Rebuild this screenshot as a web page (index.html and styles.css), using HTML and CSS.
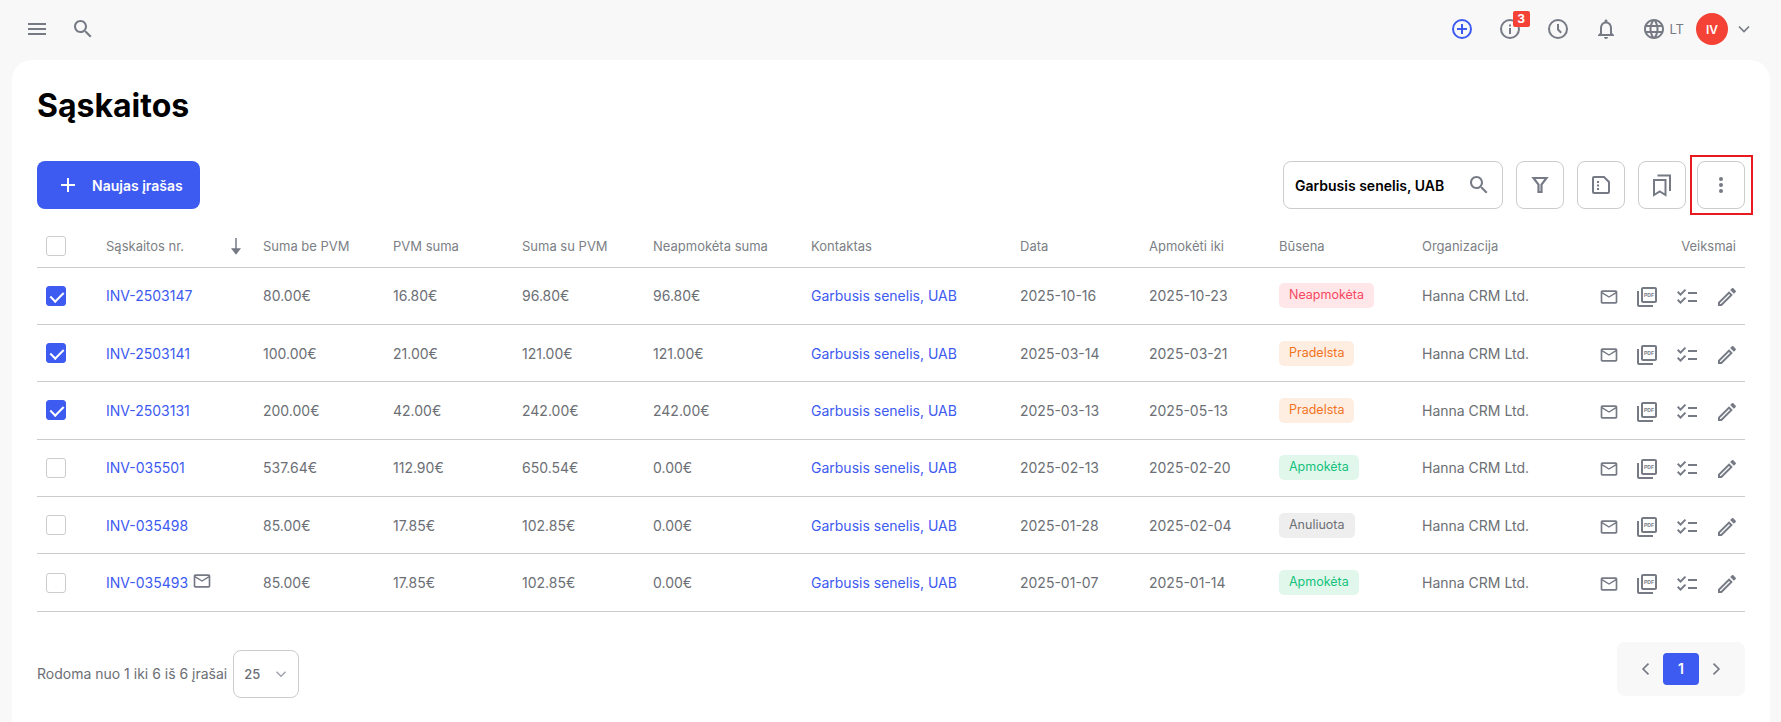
FILE: index.html
```html
<!DOCTYPE html>
<html lang="lt">

<head>
    <meta charset="UTF-8">
    <meta name="viewport" content="width=device-width, initial-scale=1.0">
    <title>Sąskaitos</title>

    <link rel="stylesheet" href="styles.css">
</head>

<body>
    <svg class="sprite" xmlns="http://www.w3.org/2000/svg">
        <symbol id="i-menu" viewBox="0 0 24 24"><path d="M3 18h18v-2H3v2zm0-5h18v-2H3v2zm0-7v2h18V6H3z"/></symbol>
        <symbol id="i-search" viewBox="0 0 24 24"><path d="M15.5 14h-.79l-.28-.27C15.41 12.59 16 11.11 16 9.5 16 5.91 13.09 3 9.5 3S3 5.91 3 9.5 5.91 16 9.5 16c1.61 0 3.09-.59 4.23-1.57l.27.28v.79l5 4.99L20.49 19l-4.99-5zm-6 0C7.01 14 5 11.99 5 9.5S7.01 5 9.5 5 14 7.01 14 9.5 11.99 14 9.5 14z"/></symbol>
        <symbol id="i-plus" viewBox="0 0 24 24"><path d="M19 13h-6v6h-2v-6H5v-2h6V5h2v6h6v2z"/></symbol>
        <symbol id="i-add-circle" viewBox="0 0 24 24"><circle cx="12" cy="12" r="9" fill="none" stroke="currentColor" stroke-width="2"/><path d="M7 11h4V7h2v4h4v2h-4v4h-2v-4H7z"/></symbol>
        <symbol id="i-info" viewBox="0 0 24 24"><circle cx="12" cy="12" r="9" fill="none" stroke="currentColor" stroke-width="2"/><path d="M11 11h2v6h-2zM11 7.5h2v2h-2z"/></symbol>
        <symbol id="i-clock" viewBox="0 0 24 24"><circle cx="12" cy="12" r="9" fill="none" stroke="currentColor" stroke-width="2"/><path d="M12 7v5.5l3.2 3.2" fill="none" stroke="currentColor" stroke-width="2"/></symbol>
        <symbol id="i-bell" viewBox="0 0 24 24"><path d="M12 22c1.1 0 2-.9 2-2h-4c0 1.1.9 2 2 2zm6-6v-5c0-3.07-1.63-5.64-4.5-6.32V4c0-.83-.67-1.5-1.5-1.5s-1.5.67-1.5 1.5v.68C7.64 5.36 6 7.92 6 11v5l-2 2v1h16v-1l-2-2zm-2 1H8v-6c0-2.48 1.51-4.5 4-4.5s4 2.02 4 4.5v6z"/></symbol>
        <symbol id="i-globe" viewBox="0 0 24 24"><path d="M11.99 2C6.47 2 2 6.48 2 12s4.47 10 9.99 10C17.52 22 22 17.52 22 12S17.52 2 11.99 2zm6.93 6h-2.95c-.32-1.25-.78-2.45-1.38-3.56 1.84.63 3.37 1.91 4.33 3.56zM12 4.04c.83 1.2 1.48 2.53 1.91 3.96h-3.82c.43-1.43 1.08-2.76 1.91-3.96zM4.26 14C4.1 13.36 4 12.69 4 12s.1-1.36.26-2h3.38c-.08.66-.14 1.32-.14 2 0 .68.06 1.34.14 2H4.26zm.82 2h2.95c.32 1.25.78 2.45 1.38 3.56-1.84-.63-3.37-1.9-4.33-3.56zm2.95-8H5.08c.96-1.66 2.49-2.93 4.33-3.56C8.81 5.55 8.35 6.75 8.03 8zM12 19.96c-.83-1.2-1.48-2.53-1.91-3.96h3.82c-.43 1.43-1.08 2.76-1.91 3.96zM14.34 14H9.66c-.09-.66-.16-1.32-.16-2 0-.68.07-1.35.16-2h4.68c.09.65.16 1.32.16 2 0 .68-.07 1.34-.16 2zm.25 5.56c.6-1.11 1.06-2.31 1.38-3.56h2.95c-.96 1.65-2.49 2.93-4.33 3.56zM16.36 14c.08-.66.14-1.32.14-2 0-.68-.06-1.34-.14-2h3.38c.16.64.26 1.31.26 2s-.1 1.36-.26 2h-3.38z"/></symbol>
        <symbol id="i-chevron-down" viewBox="0 0 24 24"><path d="M6 9l6 6 6-6" fill="none" stroke="currentColor" stroke-width="2"/></symbol>
        <symbol id="i-chevron-left" viewBox="0 0 24 24"><path d="M15 5.5L8.5 12l6.5 6.5" fill="none" stroke="currentColor" stroke-width="2"/></symbol>
        <symbol id="i-chevron-right" viewBox="0 0 24 24"><path d="M9 5.5l6.5 6.5L9 18.5" fill="none" stroke="currentColor" stroke-width="2"/></symbol>
        <symbol id="i-filter" viewBox="0 0 24 24"><path d="M5.5 5h13L13.5 11.5V19h-3v-7.500z" fill="none" stroke="currentColor" stroke-width="2.200"/></symbol>
        <symbol id="i-note" viewBox="0 0 24 24"><path d="M4 5a1 1 0 0 1 1-1h10l5 5v10a1 1 0 0 1-1 1H5a1 1 0 0 1-1-1z" fill="none" stroke="currentColor" stroke-width="2"/><path d="M8 8h2v2H8zM8 11.500h2v2H8zM8 15h2v2H8z"/></symbol>
        <symbol id="i-bookmarks" viewBox="0 0 24 24"><path d="M4 7h11.500v15l-5.750-3.500L4 22z" fill="none" stroke="currentColor" stroke-width="2"/><path d="M7.500 2.500H20V18" fill="none" stroke="currentColor" stroke-width="2"/></symbol>
        <symbol id="i-dots" viewBox="0 0 24 24"><circle cx="12" cy="6" r="2"/><circle cx="12" cy="12" r="2"/><circle cx="12" cy="18" r="2"/></symbol>
        <symbol id="i-mail" viewBox="0 0 24 24"><path d="M22 6c0-1.100-.9-2-2-2H4c-1.100 0-2 .9-2 2v12c0 1.100.9 2 2 2h16c1.100 0 2-.9 2-2V6zm-2 0l-8 5-8-5h16zm0 12H4V8l8 5 8-5v10z"/></symbol>
        <symbol id="i-pdf" viewBox="0 0 24 24"><path d="M20 2H8c-1.100 0-2 .9-2 2v12c0 1.100.9 2 2 2h12c1.100 0 2-.9 2-2V4c0-1.100-.9-2-2-2zm0 14H8V4h12v12zM4 6H2v14c0 1.100.9 2 2 2h14v-2H4V6z"/><text x="14" y="12" text-anchor="middle" font-family="Liberation Sans, sans-serif" font-size="5" font-weight="700">PDF</text></symbol>
        <symbol id="i-checklist" viewBox="0 0 24 24"><path d="M22 7h-9v2h9V7zM22 15h-9v2h9v-2zM5.540 11L2 7.460l1.410-1.410 2.120 2.120 4.240-4.240 1.410 1.410L5.540 11zM5.540 19L2 15.460l1.410-1.410 2.120 2.120 4.240-4.240 1.410 1.410L5.540 19z"/></symbol>
        <symbol id="i-pencil" viewBox="0 0 24 24"><path d="M14.060 9L15 9.940 5.920 19H5v-.92L14.060 9M17.660 3c-.25 0-.51.1-.7.29l-1.830 1.830 3.750 3.750 1.830-1.830c.39-.39.39-1.040 0-1.410l-2.340-2.340c-.2-.2-.45-.29-.71-.29M14.060 6.190L3 17.250V21h3.750L17.810 9.940l-3.750-3.750z"/></symbol>
    </svg>

    <header class="topbar">
        <div class="topbar-left">
            <svg class="icon"><use href="#i-menu"/></svg>
            <svg class="icon"><use href="#i-search"/></svg>
        </div>
        <div class="topbar-right">
            <svg class="icon icon-blue"><use href="#i-add-circle"/></svg>
            <span class="notify">
                <svg class="icon"><use href="#i-info"/></svg>
                <span class="notify-badge">3</span>
            </span>
            <svg class="icon"><use href="#i-clock"/></svg>
            <svg class="icon"><use href="#i-bell"/></svg>
            <span class="lang">
                <svg class="icon"><use href="#i-globe"/></svg>
                <span>LT</span>
            </span>
            <span class="avatar">IV</span>
            <svg class="icon icon-chevron"><use href="#i-chevron-down"/></svg>
        </div>
    </header>

    <main class="card">
        <h1>Sąskaitos</h1>

        <div class="toolbar">
            <button class="btn-primary" type="button">
                <svg class="icon"><use href="#i-plus"/></svg>
                Naujas įrašas
            </button>
            <div class="tools">
                <div class="search-box">
                    <input type="text" value="Garbusis senelis, UAB">
                    <svg class="icon"><use href="#i-search"/></svg>
                </div>
                <button class="btn-tool" type="button"><svg class="icon"><use href="#i-filter"/></svg></button>
                <button class="btn-tool" type="button"><svg class="icon"><use href="#i-note"/></svg></button>
                <button class="btn-tool" type="button"><svg class="icon"><use href="#i-bookmarks"/></svg></button>
                <button class="btn-tool btn-marked" type="button"><svg class="icon"><use href="#i-dots"/></svg></button>
            </div>
        </div>

        <table>
            <colgroup>
                <col class="col-check">
                <col class="col-nr">
                <col class="col-num">
                <col class="col-num2">
                <col class="col-num3">
                <col class="col-due">
                <col class="col-contact">
                <col class="col-date">
                <col class="col-date2">
                <col class="col-status">
                <col class="col-org">
                <col class="col-actions">
            </colgroup>
            <thead>
                <tr>
                    <th><span class="checkbox"></span></th>
                    <th>
                        <div class="th-sort">
                            Sąskaitos nr.
                            <svg class="sort-arrow" viewBox="0 0 10 18"><path d="M5 1v14M1.500 12L5 16.500 8.500 12z"/></svg>
                        </div>
                    </th>
                    <th>Suma be PVM</th>
                    <th>PVM suma</th>
                    <th>Suma su PVM</th>
                    <th>Neapmokėta suma</th>
                    <th>Kontaktas</th>
                    <th>Data</th>
                    <th>Apmokėti iki</th>
                    <th>Būsena</th>
                    <th>Organizacija</th>
                    <th class="th-actions">Veiksmai</th>
                </tr>
            </thead>
            <tbody>
                <tr>
                    <td><span class="checkbox checked"></span></td>
                    <td><a href="#">INV-2503147</a></td>
                    <td>80.00€</td>
                    <td>16.80€</td>
                    <td>96.80€</td>
                    <td>96.80€</td>
                    <td><a href="#">Garbusis senelis, UAB</a></td>
                    <td>2025-10-16</td>
                    <td>2025-10-23</td>
                    <td><span class="badge badge-unpaid">Neapmokėta</span></td>
                    <td>Hanna CRM Ltd.</td>
                    <td>
                        <div class="actions">
                            <svg class="icon icon-sm"><use href="#i-mail"/></svg>
                            <svg class="icon"><use href="#i-pdf"/></svg>
                            <svg class="icon"><use href="#i-checklist"/></svg>
                            <svg class="icon"><use href="#i-pencil"/></svg>
                        </div>
                    </td>
                </tr>
                <tr>
                    <td><span class="checkbox checked"></span></td>
                    <td><a href="#">INV-2503141</a></td>
                    <td>100.00€</td>
                    <td>21.00€</td>
                    <td>121.00€</td>
                    <td>121.00€</td>
                    <td><a href="#">Garbusis senelis, UAB</a></td>
                    <td>2025-03-14</td>
                    <td>2025-03-21</td>
                    <td><span class="badge badge-late">Pradelsta</span></td>
                    <td>Hanna CRM Ltd.</td>
                    <td>
                        <div class="actions">
                            <svg class="icon icon-sm"><use href="#i-mail"/></svg>
                            <svg class="icon"><use href="#i-pdf"/></svg>
                            <svg class="icon"><use href="#i-checklist"/></svg>
                            <svg class="icon"><use href="#i-pencil"/></svg>
                        </div>
                    </td>
                </tr>
                <tr>
                    <td><span class="checkbox checked"></span></td>
                    <td><a href="#">INV-2503131</a></td>
                    <td>200.00€</td>
                    <td>42.00€</td>
                    <td>242.00€</td>
                    <td>242.00€</td>
                    <td><a href="#">Garbusis senelis, UAB</a></td>
                    <td>2025-03-13</td>
                    <td>2025-05-13</td>
                    <td><span class="badge badge-late">Pradelsta</span></td>
                    <td>Hanna CRM Ltd.</td>
                    <td>
                        <div class="actions">
                            <svg class="icon icon-sm"><use href="#i-mail"/></svg>
                            <svg class="icon"><use href="#i-pdf"/></svg>
                            <svg class="icon"><use href="#i-checklist"/></svg>
                            <svg class="icon"><use href="#i-pencil"/></svg>
                        </div>
                    </td>
                </tr>
                <tr>
                    <td><span class="checkbox"></span></td>
                    <td><a href="#">INV-035501</a></td>
                    <td>537.64€</td>
                    <td>112.90€</td>
                    <td>650.54€</td>
                    <td>0.00€</td>
                    <td><a href="#">Garbusis senelis, UAB</a></td>
                    <td>2025-02-13</td>
                    <td>2025-02-20</td>
                    <td><span class="badge badge-paid">Apmokėta</span></td>
                    <td>Hanna CRM Ltd.</td>
                    <td>
                        <div class="actions">
                            <svg class="icon icon-sm"><use href="#i-mail"/></svg>
                            <svg class="icon"><use href="#i-pdf"/></svg>
                            <svg class="icon"><use href="#i-checklist"/></svg>
                            <svg class="icon"><use href="#i-pencil"/></svg>
                        </div>
                    </td>
                </tr>
                <tr>
                    <td><span class="checkbox"></span></td>
                    <td><a href="#">INV-035498</a></td>
                    <td>85.00€</td>
                    <td>17.85€</td>
                    <td>102.85€</td>
                    <td>0.00€</td>
                    <td><a href="#">Garbusis senelis, UAB</a></td>
                    <td>2025-01-28</td>
                    <td>2025-02-04</td>
                    <td><span class="badge badge-void">Anuliuota</span></td>
                    <td>Hanna CRM Ltd.</td>
                    <td>
                        <div class="actions">
                            <svg class="icon icon-sm"><use href="#i-mail"/></svg>
                            <svg class="icon"><use href="#i-pdf"/></svg>
                            <svg class="icon"><use href="#i-checklist"/></svg>
                            <svg class="icon"><use href="#i-pencil"/></svg>
                        </div>
                    </td>
                </tr>
                <tr>
                    <td><span class="checkbox"></span></td>
                    <td>
                        <div class="nr-cell">
                            <a href="#">INV-035493</a>
                            <svg class="icon icon-sm"><use href="#i-mail"/></svg>
                        </div>
                    </td>
                    <td>85.00€</td>
                    <td>17.85€</td>
                    <td>102.85€</td>
                    <td>0.00€</td>
                    <td><a href="#">Garbusis senelis, UAB</a></td>
                    <td>2025-01-07</td>
                    <td>2025-01-14</td>
                    <td><span class="badge badge-paid">Apmokėta</span></td>
                    <td>Hanna CRM Ltd.</td>
                    <td>
                        <div class="actions">
                            <svg class="icon icon-sm"><use href="#i-mail"/></svg>
                            <svg class="icon"><use href="#i-pdf"/></svg>
                            <svg class="icon"><use href="#i-checklist"/></svg>
                            <svg class="icon"><use href="#i-pencil"/></svg>
                        </div>
                    </td>
                </tr>
            </tbody>
        </table>

        <div class="table-footer">
            <div class="page-size">
                <span>Rodoma nuo 1 iki 6 iš 6 įrašai</span>
                <div class="size-select">
                    <span>25</span>
                    <svg class="icon icon-xs"><use href="#i-chevron-down"/></svg>
                </div>
            </div>
            <div class="pager">
                <svg class="icon icon-pager"><use href="#i-chevron-left"/></svg>
                <span class="page-current">1</span>
                <svg class="icon icon-pager"><use href="#i-chevron-right"/></svg>
            </div>
        </div>
    </main>
</body>

</html>
```

FILE: styles.css
```css
* {
    margin: 0;
    padding: 0;
    box-sizing: border-box;
}

body {
    font-family: Inter, 'Noto Sans', sans-serif;
    background-color: #f8f8f8;
    color: #6c6f75;
    font-size: 14px;
    height: 100vh;
    display: flex;
    flex-direction: column;
    overflow: hidden;
}

.sprite {
    display: none;
}

.icon {
    width: 24px;
    height: 24px;
    fill: currentColor;
    color: #757a85;
    flex-shrink: 0;
    display: block;
}

.icon-sm {
    width: 20px;
    height: 20px;
}

.icon-blue {
    color: #3d5af1;
}

/* Top bar */

.topbar {
    height: 60px;
    flex-shrink: 0;
    display: flex;
    justify-content: space-between;
    align-items: center;
    padding: 0 27px 2px 25px;
}

.topbar-left {
    display: flex;
    align-items: center;
    gap: 22px;
}

.topbar-right {
    display: flex;
    align-items: center;
    gap: 24px;
}

.notify {
    position: relative;
    display: block;
}

.notify-badge {
    position: absolute;
    top: -6px;
    left: 15px;
    width: 17px;
    height: 16px;
    background-color: #f44336;
    color: white;
    font-size: 12px;
    font-weight: 700;
    line-height: 16px;
    text-align: center;
    border-radius: 2px;
}

.lang {
    display: flex;
    align-items: center;
    gap: 4px;
    font-size: 13px;
    color: #757a85;
    margin-right: -12px;
}

.avatar {
    width: 32px;
    height: 32px;
    border-radius: 50%;
    background-color: #f44336;
    color: white;
    font-size: 12px;
    font-weight: 600;
    display: flex;
    justify-content: center;
    align-items: center;
}

.icon-chevron {
    width: 20px;
    height: 20px;
    margin-left: -18px;
}

/* Card */

.card {
    flex: 1;
    margin: 0 11px 0 12px;
    padding: 0 25px;
    background-color: white;
    border-radius: 20px 20px 0 0;
}

h1 {
    font-size: 32px;
    font-weight: 700;
    line-height: 40px;
    color: black;
    padding-top: 26px;
    margin-bottom: 35px;
}

.toolbar {
    display: flex;
    justify-content: space-between;
    margin-bottom: 16px;
}

.btn-primary {
    width: 163px;
    height: 48px;
    padding-left: 19px;
    display: flex;
    align-items: center;
    gap: 12px;
    background-color: #3d5af1;
    color: white;
    border: none;
    border-radius: 8px;
    font-family: inherit;
    font-size: 14px;
    font-weight: 600;
}

.btn-primary .icon {
    color: white;
}

.tools {
    display: flex;
    gap: 13px;
}

.search-box {
    width: 220px;
    height: 48px;
    padding: 0 11px;
    display: flex;
    align-items: center;
    border: 1px solid #ccc;
    border-radius: 8px;
}

.search-box input {
    flex: 1;
    min-width: 0;
    border: none;
    outline: none;
    font-family: inherit;
    font-size: 14px;
    font-weight: 600;
    color: black;
}

.btn-tool {
    width: 48px;
    height: 48px;
    display: flex;
    justify-content: center;
    align-items: center;
    background-color: white;
    border: 1px solid #ccc;
    border-radius: 8px;
}

.btn-marked {
    position: relative;
    margin-left: -2px;
}

.btn-marked::after {
    content: "";
    position: absolute;
    top: -7px;
    left: -8px;
    right: -9px;
    bottom: -7px;
    border: 2px solid #e8191f;
}

/* Table */

table {
    width: 100%;
    border-collapse: collapse;
    table-layout: fixed;
}

.col-check { width: 69px; }
.col-nr { width: 157px; }
.col-num { width: 130px; }
.col-num2 { width: 129px; }
.col-num3 { width: 131px; }
.col-due { width: 158px; }
.col-contact { width: 209px; }
.col-date { width: 129px; }
.col-date2 { width: 130px; }
.col-status { width: 143px; }
.col-org { width: 163px; }

th {
    height: 42px;
    font-size: 13px;
    font-weight: 400;
    color: #7c7f85;
    text-align: left;
    border-bottom: 1px solid #ccc;
    white-space: nowrap;
}

td {
    height: 57.4px;
    border-bottom: 1px solid #ccc;
    white-space: nowrap;
}

a {
    color: #3d5af1;
    text-decoration: none;
}

.checkbox {
    display: block;
    width: 20px;
    height: 20px;
    margin-left: 9px;
    border: 1px solid #ccc;
    border-radius: 3px;
    position: relative;
}

.checkbox.checked {
    background-color: #3d5af1;
    border-color: #3d5af1;
}

.checkbox.checked::after {
    content: "";
    position: absolute;
    left: 6px;
    top: 2px;
    width: 6px;
    height: 11px;
    border: solid white;
    border-width: 0 2px 2px 0;
    transform: rotate(45deg);
}

.th-sort {
    display: flex;
    align-items: center;
    justify-content: space-between;
    padding-right: 22px;
}

.sort-arrow {
    width: 10px;
    height: 18px;
    fill: #757a85;
    stroke: #757a85;
    stroke-width: 1.5;
}

.th-actions {
    text-align: right;
    padding-right: 9px;
}

.nr-cell {
    display: flex;
    align-items: center;
    gap: 4px;
}

.nr-cell .icon {
    margin-top: -4px;
}

.badge {
    display: inline-block;
    height: 25px;
    line-height: 24px;
    padding: 0 10px;
    font-size: 12.5px;
    border-radius: 5px;
    vertical-align: middle;
}

.badge-unpaid {
    background-color: #ffe6e9;
    color: #f6485f;
}

.badge-late {
    background-color: #feeee2;
    color: #f2731e;
}

.badge-paid {
    background-color: #e1f7ec;
    color: #14c27c;
}

.badge-void {
    background-color: #eeeeee;
    color: #6c6f75;
}

.actions {
    display: flex;
    justify-content: flex-end;
    align-items: center;
    gap: 16px;
    padding-right: 6px;
    margin-top: 3px;
}

/* Footer */

.table-footer {
    display: flex;
    justify-content: space-between;
    align-items: flex-start;
    padding-top: 30px;
}

.page-size {
    display: flex;
    align-items: center;
    gap: 6px;
    margin-top: 8px;
}

.size-select {
    width: 66px;
    height: 48px;
    padding: 0 8px 0 10px;
    display: flex;
    justify-content: space-between;
    align-items: center;
    border: 1px solid #ccc;
    border-radius: 8px;
    font-size: 13px;
    font-weight: 500;
}

.icon-xs {
    width: 18px;
    height: 18px;
    color: #a0a4ad;
}

.pager {
    width: 128px;
    height: 54px;
    display: flex;
    justify-content: center;
    align-items: center;
    gap: 7px;
    background-color: #f8f8f8;
    border-radius: 8px;
}

.icon-pager {
    width: 20px;
    height: 20px;
}

.page-current {
    width: 36px;
    height: 32px;
    line-height: 32px;
    text-align: center;
    background-color: #3d5af1;
    color: white;
    font-weight: 600;
    border-radius: 4px;
}
```
